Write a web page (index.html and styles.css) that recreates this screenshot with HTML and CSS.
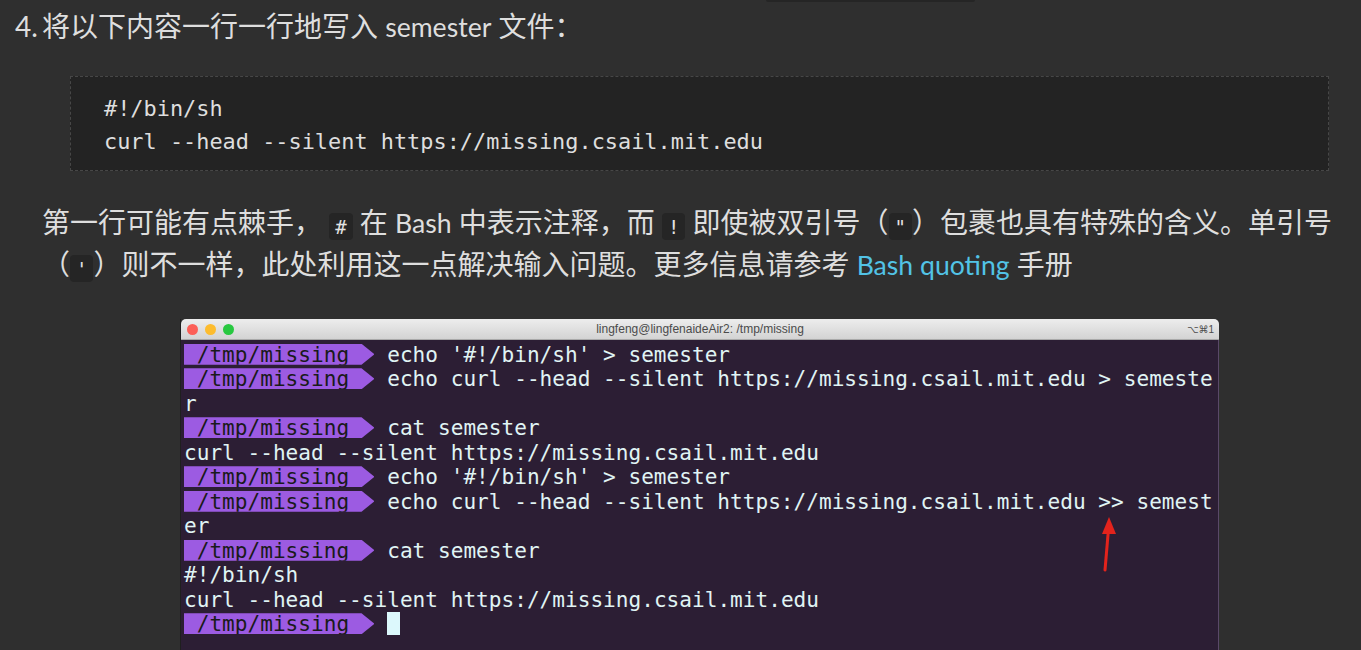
FILE: index.html
```html
<!DOCTYPE html>
<html lang="zh-CN">
<head>
<meta charset="utf-8">
<title>semester</title>
<link rel="stylesheet" href="styles.css">
</head>
<body>
<div class="prev"><div class="prev-code"></div></div>
<main class="doc">
  <div class="step">
    <span class="num">4.</span>
    <div class="step-body">
      <p class="lead">将以下内容一行一行地写入 <span class="en">semester</span> 文件：</p>
      <pre class="code"><code>#!/bin/sh
curl --head --silent https://missing.csail.mit.edu</code></pre>
      <p class="para">第一行可能有点棘手， <code class="ic">#</code> 在 <span class="en">Bash</span> 中表示注释，而 <code class="ic">!</code> 即使被双引号（<code class="ic">"</code>）包裹也具有特殊的含义。单引号<br>（<code class="ic">'</code>）则不一样，此处利用这一点解决输入问题。更多信息请参考 <a class="link en" href="#">Bash quoting</a> 手册</p>
      <figure class="term">
        <div class="term-bar">
          <div class="lights"><span class="light red"></span><span class="light yellow"></span><span class="light green"></span></div>
          <div class="term-title">lingfeng@lingfenaideAir2: /tmp/missing</div>
          <div class="term-key">⌥⌘1</div>
        </div>
        <div class="term-body">
          <div class="row"><span class="prompt"> /tmp/missing</span><span> echo '#!/bin/sh' &gt; semester</span></div>
          <div class="row"><span class="prompt"> /tmp/missing</span><span> echo curl --head --silent https://missing.csail.mit.edu &gt; semeste</span></div>
          <div class="row"><span>r</span></div>
          <div class="row"><span class="prompt"> /tmp/missing</span><span> cat semester</span></div>
          <div class="row"><span>curl --head --silent https://missing.csail.mit.edu</span></div>
          <div class="row"><span class="prompt"> /tmp/missing</span><span> echo '#!/bin/sh' &gt; semester</span></div>
          <div class="row"><span class="prompt"> /tmp/missing</span><span> echo curl --head --silent https://missing.csail.mit.edu &gt;&gt; semest</span></div>
          <div class="row"><span>er</span></div>
          <div class="row"><span class="prompt"> /tmp/missing</span><span> cat semester</span></div>
          <div class="row"><span>#!/bin/sh</span></div>
          <div class="row"><span>curl --head --silent https://missing.csail.mit.edu</span></div>
          <div class="row"><span class="prompt"> /tmp/missing</span><span> </span><span class="cursor"></span></div>
          <svg class="mark" width="34" height="62" viewBox="0 0 34 62">
            <line x1="14" y1="55" x2="17.5" y2="14" stroke="#e3231c" stroke-width="3" stroke-linecap="round"/>
            <polygon points="18,2 11,19 25,19" fill="#e3231c"/>
          </svg>
        </div>
      </figure>
    </div>
  </div>
</main>
</body>
</html>
```

FILE: styles.css
```css
html, body {
  margin: 0;
  padding: 0;
  background: #2f2f2f;
}

body {
  width: 1361px;
  height: 650px;
  overflow: hidden;
  font-family: Lato, "Noto Sans CJK SC", sans-serif;
  font-size: 28px;
  color: #dedede;
}

.en {
  font-size: 26.6px;
  line-height: 1;
}

.prev {
  height: 2px;
}

.prev-code {
  margin-left: 766px;
  width: 209px;
  height: 2px;
  background: #252525;
  border-radius: 0 0 3px 3px;
}

.doc {
  padding-top: 3px;
}

.step {
  display: flex;
  padding-left: 15px;
}

.num {
  width: 27px;
  flex: none;
  line-height: 42px;
}

.step-body {
  width: 1287px;
}

.lead {
  margin: 0;
  line-height: 42px;
}

.code {
  margin: 29px 0 0 28px;
  width: 1259px;
  box-sizing: border-box;
  background: #232323;
  border: 1px dashed #474747;
  padding: 15px 33px 12px;
  font-family: "DejaVu Sans Mono", monospace;
  font-size: 21.9px;
  line-height: 33px;
  color: #dedede;
}

.code code {
  font-family: inherit;
}

.para {
  margin: 30px 0 0;
  line-height: 42px;
  white-space: nowrap;
}

.ic {
  font-family: "DejaVu Sans Mono", monospace;
  font-size: 19px;
  line-height: 1;
  background: #252525;
  border-radius: 4px;
  padding: 2.5px 6px;
  color: #e2e2e2;
}

.link {
  color: #52c3e6;
  text-decoration: none;
}

.term {
  margin: 34px 0 0 138px;
  width: 1039px;
  border-left: 1px solid #1f1f1f;
  box-sizing: border-box;
}

.term-bar {
  height: 20px;
  display: grid;
  grid-template-columns: 1fr auto 1fr;
  align-items: center;
  background: linear-gradient(#ededed, #d3d3d3);
  border-radius: 5px 5px 0 0;
  border-bottom: 1px solid #a9a9a9;
}

.lights {
  display: flex;
  gap: 7px;
  padding-left: 6px;
}

.light {
  width: 11px;
  height: 11px;
  border-radius: 50%;
}

.red { background: #fc5f57; }
.yellow { background: #fdbc2e; }
.green { background: #28c840; }

.term-title {
  font-family: "Liberation Sans", sans-serif;
  font-size: 12px;
  color: #4b4b4b;
}

.term-key {
  justify-self: end;
  padding-right: 5px;
  font-family: "Liberation Sans", "DejaVu Sans", sans-serif;
  font-size: 10px;
  color: #4b4b4b;
}

.term-body {
  position: relative;
  background: #2c1e34;
  border-right: 1px solid #5a4968;
  padding: 2px 0 20px 3px;
  font-family: "DejaVu Sans Mono", monospace;
  font-size: 21.1px;
  color: #e0f4f4;
}

.row {
  height: 24.5px;
  display: flex;
  align-items: center;
  white-space: pre;
}

.prompt {
  width: 15ch;
  height: 21px;
  display: flex;
  align-items: center;
  background: #9c5be2;
  color: #1a1a1a;
  clip-path: polygon(0 0, calc(100% - 13px) 0, 100% 50%, calc(100% - 13px) 100%, 0 100%);
}

.cursor {
  display: inline-block;
  width: 1ch;
  height: 23px;
  background: #dcf8fc;
}

.mark {
  position: absolute;
  left: 910px;
  top: 175px;
}
```
